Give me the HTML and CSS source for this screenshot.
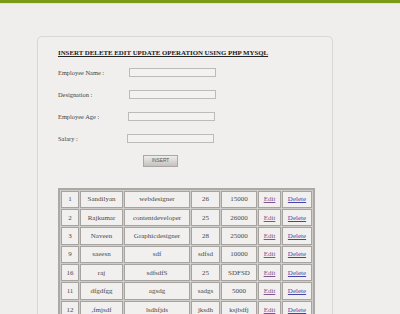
FILE: index.html
```html
<!DOCTYPE html>
<html>
<head>
<meta charset="utf-8">
<link rel="stylesheet" href="styles.css">
</head>
<body>
<div class="topbar"></div>
<div class="card">
  <h1 class="title">INSERT DELETE EDIT UPDATE OPERATION USING PHP MYSQL</h1>
  <form class="form">
    <div class="row"><span class="label">Employee Name :</span><input class="field" type="text"></div>
    <div class="row"><span class="label">Designation :</span><input class="field" type="text"></div>
    <div class="row"><span class="label l3">Employee Age :</span><input class="field" type="text"></div>
    <div class="row"><span class="label l4">Salary :</span><input class="field" type="text"></div>
    <div class="btnrow"><button type="button" class="btn">INSERT</button></div>
  </form>
  <table class="grid">
    <tr><td class="c1">1</td><td class="c2">Sandilyan</td><td class="c3">webdesigner</td><td class="c4">26</td><td class="c5">15000</td><td class="c6"><a class="edit" href="#">Edit</a></td><td class="c7"><a class="del" href="#">Delete</a></td></tr>
    <tr><td>2</td><td>Rajkumar</td><td>contentdeveloper</td><td>25</td><td>26000</td><td><a class="edit" href="#">Edit</a></td><td><a class="del" href="#">Delete</a></td></tr>
    <tr><td>3</td><td>Naveen</td><td>Graphicdesigner</td><td>28</td><td>25000</td><td><a class="edit" href="#">Edit</a></td><td><a class="del" href="#">Delete</a></td></tr>
    <tr><td>9</td><td>saeesn</td><td>sdf</td><td>sdfsd</td><td>10000</td><td><a class="edit" href="#">Edit</a></td><td><a class="del" href="#">Delete</a></td></tr>
    <tr><td>16</td><td>raj</td><td>sdfsdfS</td><td>25</td><td>SDFSD</td><td><a class="edit" href="#">Edit</a></td><td><a class="del" href="#">Delete</a></td></tr>
    <tr><td>11</td><td>dfgdfgg</td><td>agsdg</td><td>sadgs</td><td>5000</td><td><a class="edit" href="#">Edit</a></td><td><a class="del" href="#">Delete</a></td></tr>
    <tr><td>12</td><td>,fmjsdf</td><td>lsdhfjds</td><td>jksdh</td><td>ksjbdfj</td><td><a class="edit" href="#">Edit</a></td><td><a class="del" href="#">Delete</a></td></tr>
  </table>
</div>
</body>
</html>
```

FILE: styles.css
```css
html, body {
  margin: 0;
  padding: 0;
  background: #efeeec;
  font-family: "Liberation Serif", "Times New Roman", serif;
  color: #444;
  overflow: hidden;
}
.topbar {
  height: 3px;
  background: #7a9a18;
  border-bottom: 1px solid #dfe3d2;
}
.card {
  margin: 32px 0 0 37px;
  width: 254px;
  height: 400px;
  padding: 11px 20px 0 20px;
  border: 1px solid #d9d7d4;
  border-radius: 5px;
  background: #f0efed;
}
.title {
  margin: 0;
  font-size: 6.85px;
  line-height: 10px;
  font-weight: bold;
  color: #222;
  text-decoration: underline;
  white-space: nowrap;
}
.form {
  margin: 3.5px 0 0 0;
}
.row {
  display: flex;
  align-items: center;
  height: 22px;
}
.label {
  width: 71px;
  font-size: 6.4px;
  color: #444;
  white-space: nowrap;
}
.label.l3 { width: 70px; }
.label.l4 { width: 69px; }
.field {
  box-sizing: border-box;
  width: 87px;
  height: 9px;
  margin: 0;
  padding: 0;
  border: 1px solid #bdbbb8;
  background: #f3f2f0;
}
.btnrow {
  display: flex;
  margin-top: 5px;
  padding-left: 85px;
}
.btn {
  box-sizing: border-box;
  width: 35px;
  height: 12px;
  padding: 0;
  border: 1px solid #aaa7a4;
  background: linear-gradient(#eeedeb, #c4c1be);
  font-family: "Liberation Sans", Arial, sans-serif;
  font-size: 4.8px;
  color: #555;
}
.grid {
  margin-top: 21px;
  table-layout: fixed;
  width: 257px;
  border: 2px solid #aba8a5;
  border-spacing: 1px;
  background: #cfcdca;
}
.grid td {
  box-sizing: border-box;
  height: 17.4px;
  padding: 0;
  border: 1px solid #a6a3a0;
  background: #f1f0ee;
  text-align: center;
  font-size: 7px;
  color: #4a4a4a;
  white-space: nowrap;
}
.grid .c1 { width: 18px; }
.grid .c2 { width: 43px; }
.grid .c3 { width: 66px; }
.grid .c4 { width: 29px; }
.grid .c5 { width: 36px; }
.grid .c6 { width: 23px; }
.grid .c7 { width: 30px; }
.edit { color: #7a5590; }
.del { color: #4545a8; }
```
